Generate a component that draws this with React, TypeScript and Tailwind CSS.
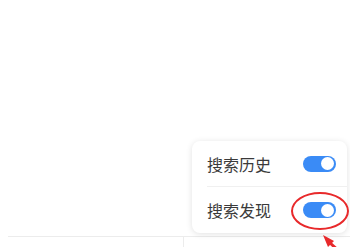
const Toggle = () => (
  <div className="w-[33px] h-[16px] rounded-full bg-[#3a8bf6] flex items-center justify-end pr-[2px]">
    <div className="w-[13px] h-[13px] rounded-full bg-white" />
  </div>
);

const rows = ['搜索历史', '搜索发现'];

export default function App() {
  return (
    <div
      className="relative w-[350px] h-[247px] bg-white overflow-hidden flex flex-col"
      style={{ fontFamily: '"Noto Sans CJK SC", "Noto Sans", sans-serif' }}
    >
      <div className="flex-1" />
      {/* bottom bar */}
      <div className="ml-2 h-[11px] border-t border-[#ececec] flex">
        <div className="w-[176px] border-r border-[#ececec]" />
        <div className="flex-1" />
      </div>

      {/* settings popover */}
      <div className="absolute left-[192px] top-[141px] w-[155px] rounded-lg bg-white shadow-[0_1px_6px_rgba(0,0,0,0.12)] pl-[15px]">
        {rows.map((label, i) => (
          <div
            key={label}
            className={`h-[46px] flex items-center justify-between pr-[11px] ${i === 0 ? 'border-b border-[#f0f0f0]' : ''}`}
          >
            <span className="text-[16px] text-[#3a3a3a] leading-none">{label}</span>
            <Toggle />
          </div>
        ))}
      </div>

      {/* annotation */}
      <div className="absolute left-[291px] top-[192px] w-[58px] h-[38px] rounded-[50%] border-2 border-[#e8292b]" />
      <svg className="absolute left-[315px] top-[233px]" width="30" height="20" viewBox="0 0 30 20">
        <polygon points="8,2 19,8 13,14" fill="#e8292b" />
        <line x1="14" y1="9" x2="26" y2="20" stroke="#e8292b" strokeWidth="3" />
      </svg>
    </div>
  );
}
